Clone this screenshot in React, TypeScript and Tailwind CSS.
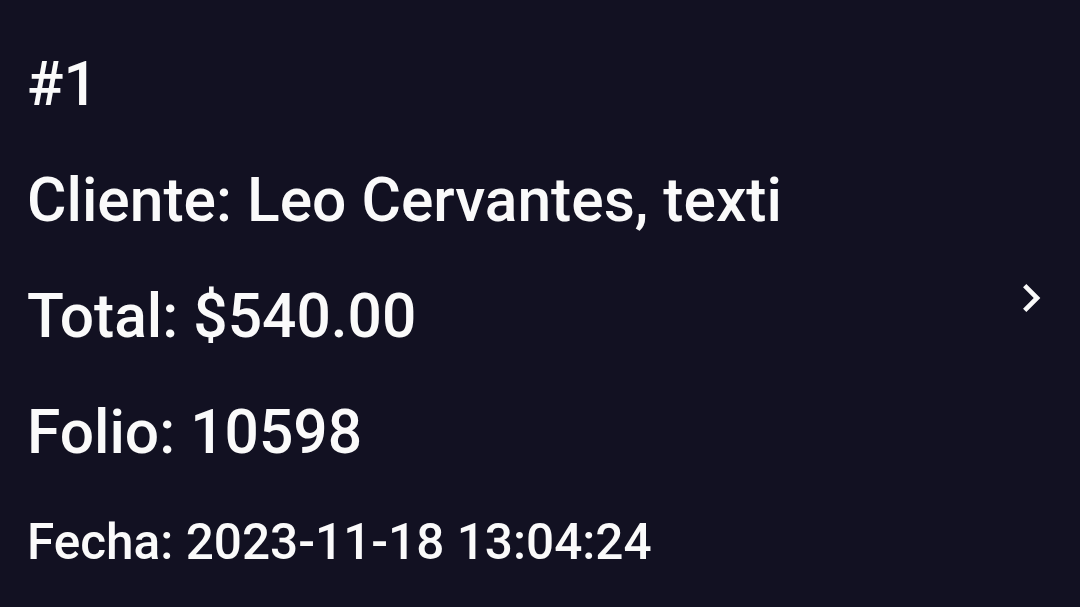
const order = {
  index: 1,
  cliente: "Leo Cervantes, texti",
  total: "$540.00",
  folio: "10598",
  fecha: "2023-11-18 13:04:24",
};

function ChevronRight() {
  // material chevron_right
  return (
    <svg viewBox="0 0 24 24" className="w-[56px] h-[56px]" fill="#fafafa" aria-hidden>
      <path d="M10 6L8.59 7.41 13.17 12l-4.58 4.59L10 18l6-6z" />
    </svg>
  );
}

export default function App() {
  return (
    <div
      className="w-[1080px] h-[607px] bg-[#121122] text-[#fafafa] flex items-start overflow-hidden"
      style={{ fontFamily: "Roboto, 'Noto Sans', sans-serif" }}
    >
      <div className="flex-1 pl-[27px] pt-[27px] font-medium">
        <p className="text-[60.5px] leading-[116px]">#{order.index}</p>
        <p className="text-[60.5px] leading-[116px]">Cliente: {order.cliente}</p>
        <p className="text-[60.5px] leading-[116px]">Total: {order.total}</p>
        <p className="text-[60.5px] leading-[116px]">Folio: {order.folio}</p>
        <p className="text-[49.5px] leading-[103px]">Fecha: {order.fecha}</p>
      </div>
      <div className="pt-[270px] pr-[21px]">
        <ChevronRight />
      </div>
    </div>
  );
}
